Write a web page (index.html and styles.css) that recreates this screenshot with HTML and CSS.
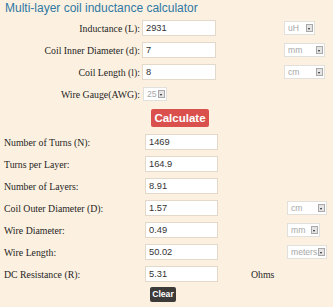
FILE: index.html
```html
<!DOCTYPE html>
<html>
<head>
<meta charset="utf-8">
<link rel="stylesheet" href="styles.css">
</head>
<body>
<div class="page">
  <h1 class="title">Multi-layer coil inductance calculator</h1>
  <div class="row top">
    <span class="label">Inductance (L):</span>
    <span class="field">2931</span>
    <span class="sel w31">uH<i class="arr"></i></span>
  </div>
  <div class="row top">
    <span class="label">Coil Inner Diameter (d):</span>
    <span class="field">7</span>
    <span class="sel w41">mm<i class="arr"></i></span>
  </div>
  <div class="row top">
    <span class="label">Coil Length (l):</span>
    <span class="field">8</span>
    <span class="sel w41">cm<i class="arr"></i></span>
  </div>
  <div class="row top">
    <span class="label">Wire Gauge(AWG):</span>
    <span class="sel gauge">25<i class="arr"></i></span>
  </div>
  <div class="btnrow">
    <span class="btn calc">Calculate</span>
  </div>
  <div class="row res">
    <span class="label">Number of Turns (N):</span>
    <span class="field">1469</span>
  </div>
  <div class="row res">
    <span class="label">Turns per Layer:</span>
    <span class="field">164.9</span>
  </div>
  <div class="row res">
    <span class="label">Number of Layers:</span>
    <span class="field">8.91</span>
  </div>
  <div class="row res">
    <span class="label">Coil Outer Diameter (D):</span>
    <span class="field">1.57</span>
    <span class="sel w40">cm<i class="arr"></i></span>
  </div>
  <div class="row res">
    <span class="label">Wire Diameter:</span>
    <span class="field">0.49</span>
    <span class="sel w33">mm<i class="arr"></i></span>
  </div>
  <div class="row res">
    <span class="label">Wire Length:</span>
    <span class="field">50.02</span>
    <span class="sel w40">meters<i class="arr"></i></span>
  </div>
  <div class="row res">
    <span class="label">DC Resistance (R):</span>
    <span class="field">5.31</span>
    <span class="unit">Ohms</span>
  </div>
  <div class="btnrow clearrow">
    <span class="btn clear">Clear</span>
  </div>
</div>
</body>
</html>
```
FILE: styles.css
```css
html, body {
  margin: 0;
  padding: 0;
  background: #fcf1e1;
}
.page {
  width: 333px;
  height: 307px;
  overflow: hidden;
  font-family: "Liberation Serif", "Times New Roman", serif;
  font-size: 9.8px;
  color: #1e1e1e;
}
.title {
  margin: 0;
  height: 17px;
  padding-left: 5px;
  font-family: "Liberation Sans", Arial, sans-serif;
  font-weight: normal;
  font-size: 12px;
  line-height: 16px;
  color: #2f78a3;
}
.row {
  display: flex;
  align-items: center;
  height: 22px;
}
.top .label {
  width: 142px;
  text-align: right;
  padding-right: 2px;
  box-sizing: border-box;
}
.res .label {
  width: 145px;
  padding-left: 4px;
  box-sizing: border-box;
}
.field {
  box-sizing: border-box;
  width: 74px;
  height: 16px;
  background: #fff;
  border: 1px solid #e3d9cb;
  font-family: "Liberation Sans", Arial, sans-serif;
  font-size: 9.3px;
  color: #333;
  line-height: 14px;
  padding-left: 3px;
}
.res .field { width: 73px; }
.sel {
  box-sizing: border-box;
  display: flex;
  align-items: center;
  justify-content: space-between;
  height: 14px;
  margin-left: 68px;
  padding: 0 1px 0 3px;
  background: #fff;
  border: 1px solid #e2e0dc;
  font-family: "Liberation Sans", Arial, sans-serif;
  font-size: 8.6px;
  color: #a8a8a8;
}
.res .sel { margin-left: 69px; }
.w31 { width: 31px; }
.w41 { width: 41px; }
.w40 { width: 40px; }
.w33 { width: 33px; }
.sel.gauge {
  width: 24px;
  margin-left: 1px;
  height: 14px;
}
.arr {
  box-sizing: border-box;
  flex: none;
  width: 7px;
  height: 8px;
  margin-left: 1px;
  border: 1px solid #a9a9a9;
  background: #e4e4e4;
  position: relative;
}
.arr::after {
  content: "";
  position: absolute;
  left: 1px;
  top: 2.5px;
  border-left: 1.5px solid transparent;
  border-right: 1.5px solid transparent;
  border-top: 2px solid #222;
}
.unit {
  margin-left: 33px;
}
.btnrow {
  height: 26px;
  display: flex;
  align-items: center;
}
.btn {
  font-family: "Liberation Sans", Arial, sans-serif;
  font-weight: bold;
  color: #fff;
  border-radius: 2px;
  text-align: center;
}
.calc {
  margin-left: 151px;
  width: 58px;
  height: 18px;
  line-height: 18px;
  font-size: 11.5px;
  background: #d9504c;
}
.clearrow {
  height: auto;
  margin-top: 2px;
}
.clear {
  margin-left: 150px;
  width: 26px;
  height: 15px;
  line-height: 15px;
  font-size: 8.6px;
  background: #3d3b3a;
}
```
